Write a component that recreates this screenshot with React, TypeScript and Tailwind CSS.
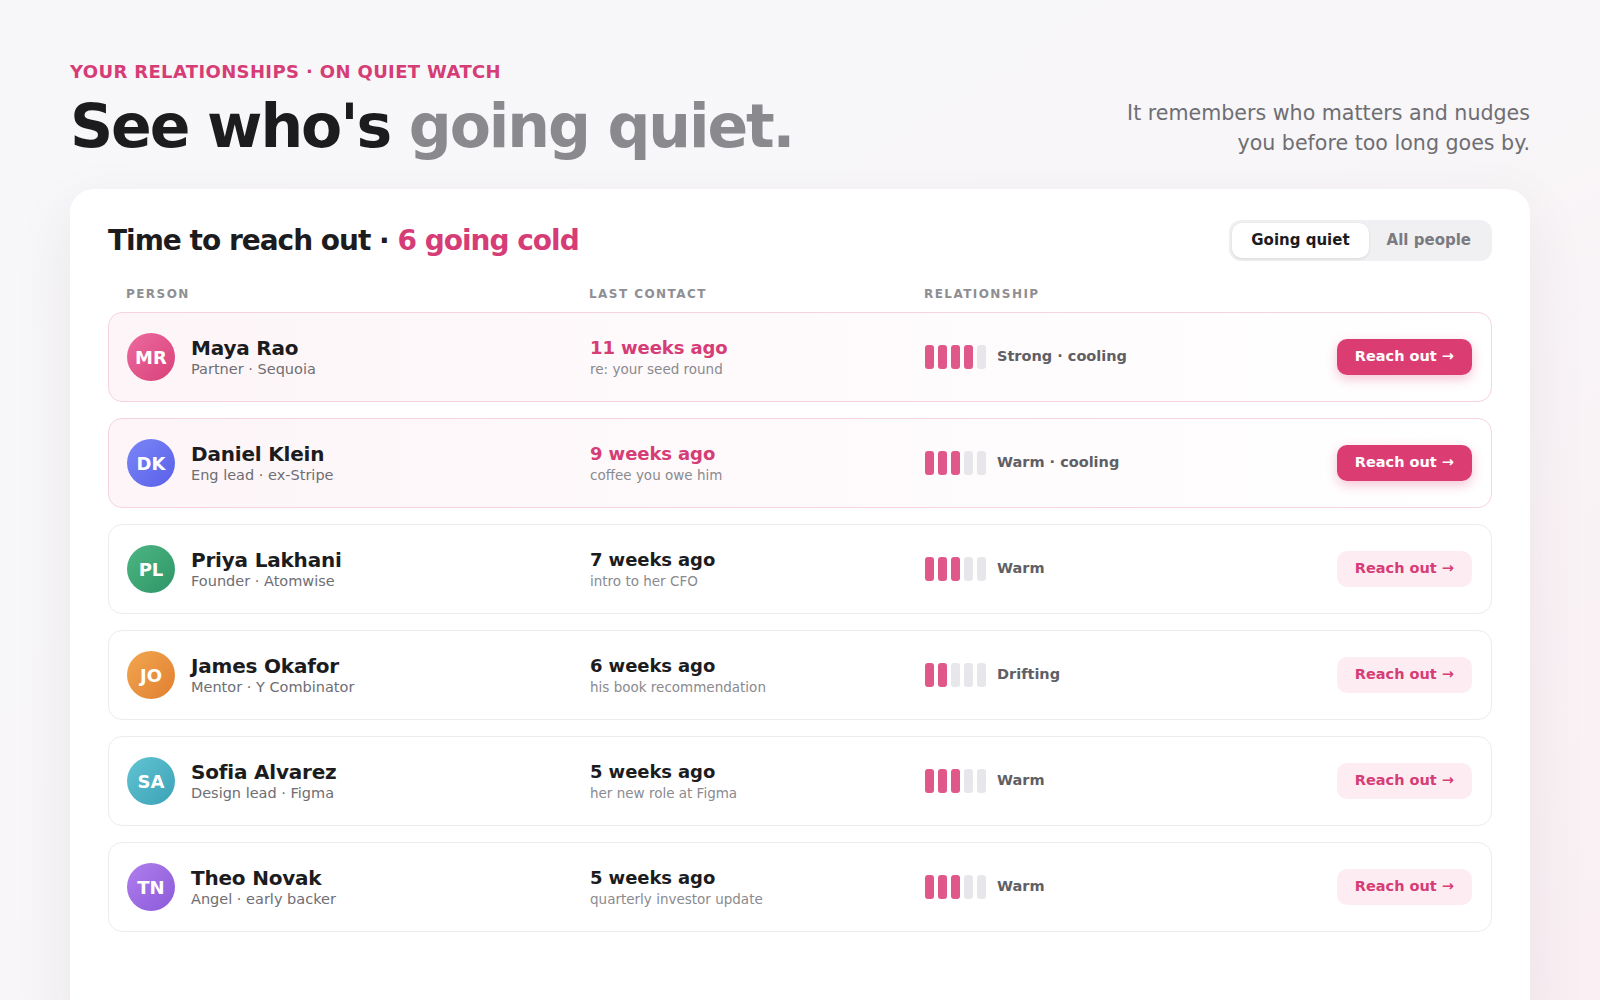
type Person = {
  initials: string;
  name: string;
  role: string;
  ago: string;
  note: string;
  bars: number;
  status: string;
  hot: boolean;
  avatar: string;
};

const people: Person[] = [
  {
    initials: "MR",
    name: "Maya Rao",
    role: "Partner · Sequoia",
    ago: "11 weeks ago",
    note: "re: your seed round",
    bars: 4,
    status: "Strong · cooling",
    hot: true,
    avatar: "bg-gradient-to-br from-[#ec6a9e] to-[#d8407a]",
  },
  {
    initials: "DK",
    name: "Daniel Klein",
    role: "Eng lead · ex-Stripe",
    ago: "9 weeks ago",
    note: "coffee you owe him",
    bars: 3,
    status: "Warm · cooling",
    hot: true,
    avatar: "bg-gradient-to-br from-[#7b86f7] to-[#5a5fe8]",
  },
  {
    initials: "PL",
    name: "Priya Lakhani",
    role: "Founder · Atomwise",
    ago: "7 weeks ago",
    note: "intro to her CFO",
    bars: 3,
    status: "Warm",
    hot: false,
    avatar: "bg-gradient-to-br from-[#4db583] to-[#2e9667]",
  },
  {
    initials: "JO",
    name: "James Okafor",
    role: "Mentor · Y Combinator",
    ago: "6 weeks ago",
    note: "his book recommendation",
    bars: 2,
    status: "Drifting",
    hot: false,
    avatar: "bg-gradient-to-br from-[#f2a650] to-[#e07f30]",
  },
  {
    initials: "SA",
    name: "Sofia Alvarez",
    role: "Design lead · Figma",
    ago: "5 weeks ago",
    note: "her new role at Figma",
    bars: 3,
    status: "Warm",
    hot: false,
    avatar: "bg-gradient-to-br from-[#62c4d3] to-[#3aa2b6]",
  },
  {
    initials: "TN",
    name: "Theo Novak",
    role: "Angel · early backer",
    ago: "5 weeks ago",
    note: "quarterly investor update",
    bars: 3,
    status: "Warm",
    hot: false,
    avatar: "bg-gradient-to-br from-[#b07eec] to-[#8b5ad9]",
  },
];

function Bars({ n }: { n: number }) {
  return (
    <div className="flex gap-1">
      {[0, 1, 2, 3, 4].map((i) => (
        <span
          key={i}
          className={
            i < n
              ? "h-6 w-[9px] rounded-[3px] bg-[#e0588a]"
              : "h-6 w-[9px] rounded-[3px] bg-[#e7e7eb]"
          }
        />
      ))}
    </div>
  );
}

function Row({ p }: { p: Person }) {
  return (
    <div
      className={
        p.hot
          ? "grid h-[90px] grid-cols-[463px_335px_1fr_auto] items-center rounded-[14px] border border-[#f6d3df] bg-gradient-to-r from-[#fdf5f8] to-white pl-[18px] pr-[19px]"
          : "grid h-[90px] grid-cols-[463px_335px_1fr_auto] items-center rounded-[14px] border border-[#ececef] bg-white pl-[18px] pr-[19px]"
      }
    >
      <div className="flex items-center gap-4">
        <div
          className={`flex h-12 w-12 items-center justify-center rounded-full text-[18px] font-bold text-white ${p.avatar}`}
        >
          {p.initials}
        </div>
        <div>
          <div className="text-[20px] font-bold leading-6 tracking-[-0.01em] text-[#1c1c1e]">
            {p.name}
          </div>
          <div className="text-[14.5px] leading-[18px] text-[#6e6e73]">{p.role}</div>
        </div>
      </div>
      <div>
        <div
          className={
            p.hot
              ? "text-[18px] font-bold leading-6 tracking-[-0.005em] text-[#d63c75]"
              : "text-[18px] font-bold leading-6 tracking-[-0.005em] text-[#1c1c1e]"
          }
        >
          {p.ago}
        </div>
        <div className="text-[13.5px] leading-[18px] text-[#8a8a8f]">{p.note}</div>
      </div>
      <div className="flex items-center gap-[11px]">
        <Bars n={p.bars} />
        <span className="text-[14.5px] font-bold text-[#5f5f65]">{p.status}</span>
      </div>
      <button
        className={
          p.hot
            ? "h-9 rounded-[10px] bg-[#db3d73] px-[18px] text-[14.5px] font-bold text-white shadow-[0_4px_12px_rgba(219,61,115,0.3)]"
            : "h-9 rounded-[10px] bg-[#fdedf2] px-[18px] text-[14.5px] font-bold text-[#d63c75]"
        }
      >
        Reach out →
      </button>
    </div>
  );
}

export default function App() {
  return (
    <div className="min-h-screen overflow-hidden bg-gradient-to-br from-[#f7f7f9] via-[#f8f6f8] to-[#faeff3] px-[70px] pt-[60px] font-['DejaVu_Sans',sans-serif]">
      <header className="flex items-end justify-between">
        <div>
          <p className="text-[18px] font-bold leading-6 tracking-[0.02em] text-[#d63c75]">
            YOUR RELATIONSHIPS · ON QUIET WATCH
          </p>
          <h1 className="mt-[12px] text-[60px] font-bold leading-[60px] tracking-[-0.035em] text-[#1c1c1e]">
            See who's <span className="text-[#8a8a8e]">going quiet.</span>
          </h1>
        </div>
        <p className="mb-[-2px] text-right text-[20.6px] leading-[30px] text-[#6e6e73]">
          It remembers who matters and nudges
          <br />
          you before too long goes by.
        </p>
      </header>

      <section className="mt-[33px] rounded-[24px] bg-white px-[38px] pb-[100px] pt-[31px] shadow-[0_20px_60px_rgba(60,40,60,0.08)]">
        <div className="flex items-center justify-between">
          <h2 className="text-[28px] font-bold leading-10 tracking-[-0.036em] text-[#1c1c1e]">
            Time to reach out · <span className="text-[#d63c75]">6 going cold</span>
          </h2>
          <div className="flex rounded-[12px] bg-[#f0f0f3] p-[3px]">
            <button className="h-[35px] rounded-[10px] bg-white px-[19px] text-[15px] font-bold text-[#1c1c1e] shadow-[0_1px_3px_rgba(0,0,0,0.1)]">
              Going quiet
            </button>
            <button className="h-[35px] rounded-[10px] px-[18px] text-[15px] font-bold text-[#7a7a80]">
              All people
            </button>
          </div>
        </div>

        <div className="mt-[25px] grid grid-cols-[463px_335px_1fr] px-[18px] text-[12px] font-bold leading-4 tracking-[0.12em] text-[#8e8e93]">
          <span>PERSON</span>
          <span>LAST CONTACT</span>
          <span>RELATIONSHIP</span>
        </div>

        <div className="mt-[10px] flex flex-col gap-4">
          {people.map((p) => (
            <Row key={p.name} p={p} />
          ))}
        </div>
      </section>
    </div>
  );
}
